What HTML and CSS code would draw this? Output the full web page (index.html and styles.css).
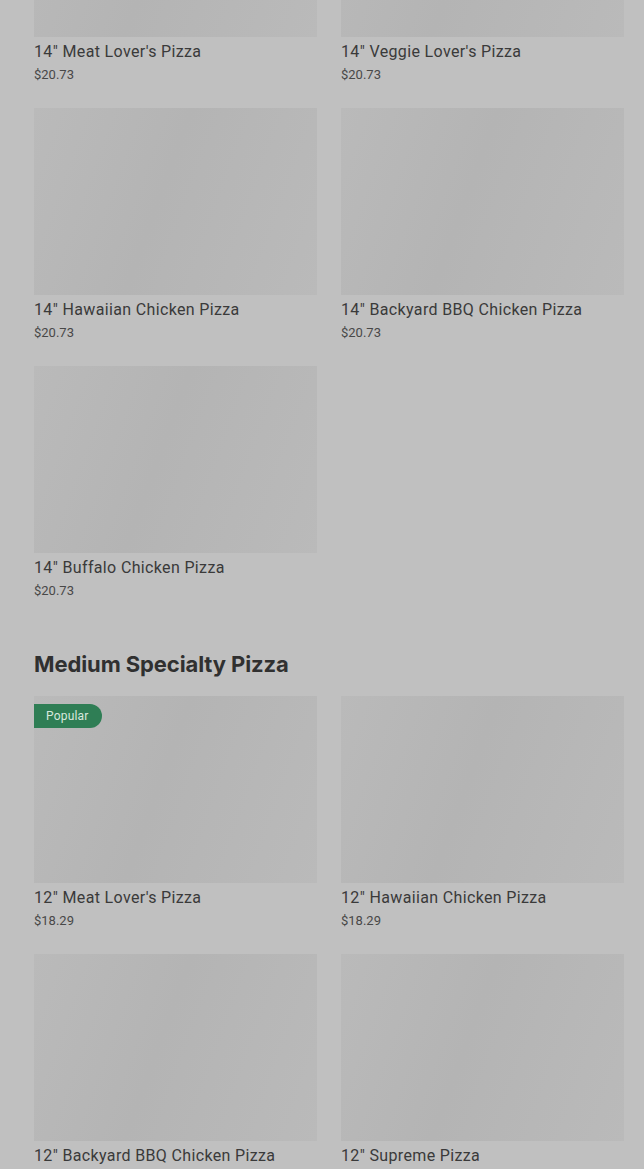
FILE: index.html
```html
<!DOCTYPE html>
<html lang="en">
<head>
    <meta charset="UTF-8">
    <meta name="viewport" content="width=device-width, initial-scale=1.0">
    <title>Menu</title>
    <link rel="stylesheet" href="styles.css">
</head>
<body>
<div class="menu">
    <section class="section first">
        <div class="grid">
            <div class="item">
                <div class="photo"></div>
                <div class="name">14" Meat Lover's Pizza</div>
                <div class="price">$20.73</div>
            </div>
            <div class="item">
                <div class="photo"></div>
                <div class="name">14" Veggie Lover's Pizza</div>
                <div class="price">$20.73</div>
            </div>
            <div class="item">
                <div class="photo"></div>
                <div class="name">14" Hawaiian Chicken Pizza</div>
                <div class="price">$20.73</div>
            </div>
            <div class="item">
                <div class="photo"></div>
                <div class="name">14" Backyard BBQ Chicken Pizza</div>
                <div class="price">$20.73</div>
            </div>
            <div class="item">
                <div class="photo"></div>
                <div class="name">14" Buffalo Chicken Pizza</div>
                <div class="price">$20.73</div>
            </div>
        </div>
    </section>

    <section class="section">
        <h2>Medium Specialty Pizza</h2>
        <div class="grid">
            <div class="item">
                <div class="photo"><span class="badge">Popular</span></div>
                <div class="name">12" Meat Lover's Pizza</div>
                <div class="price">$18.29</div>
            </div>
            <div class="item">
                <div class="photo"></div>
                <div class="name">12" Hawaiian Chicken Pizza</div>
                <div class="price">$18.29</div>
            </div>
            <div class="item">
                <div class="photo"></div>
                <div class="name">12" Backyard BBQ Chicken Pizza</div>
                <div class="price">$18.29</div>
            </div>
            <div class="item">
                <div class="photo"></div>
                <div class="name">12" Supreme Pizza</div>
                <div class="price">$18.29</div>
            </div>
        </div>
    </section>
</div>
</body>
</html>
```

FILE: styles.css
```css
html, body {
    margin: 0;
    background-color: #c0c0c0;
    overflow: hidden;
}
body {
    font-family: Roboto, "Liberation Sans", sans-serif;
    color: #3a3a3a;
}
.menu {
    padding: 0 20px 0 34px;
}
.section.first {
    margin-top: -150px;
}
.section h2 {
    margin: 47px 0 16px;
    font-family: Inter, "Liberation Sans", sans-serif;
    font-size: 22px;
    line-height: 32px;
    font-weight: 700;
    letter-spacing: -0.1px;
    color: #303030;
}
.grid {
    display: grid;
    grid-template-columns: 1fr 1fr;
    gap: 23px 24px;
}
.photo {
    position: relative;
    height: 187px;
    background: linear-gradient(110deg, #bababa 0%, #b4b4b4 45%, #bababa 100%);
}
.badge {
    position: absolute;
    top: 8px;
    left: 0;
    padding: 0 13px 0 12px;
    height: 24px;
    line-height: 24px;
    font-size: 12px;
    letter-spacing: 0.2px;
    color: #d8e8de;
    background-color: #2f7e55;
    border-radius: 0 12px 12px 0;
}
.name {
    margin-top: 4px;
    font-size: 16px;
    line-height: 22px;
    letter-spacing: 0.35px;
    color: #3a3a3a;
}
.price {
    margin-top: 2px;
    font-size: 13px;
    line-height: 20px;
    color: #484848;
}
```
